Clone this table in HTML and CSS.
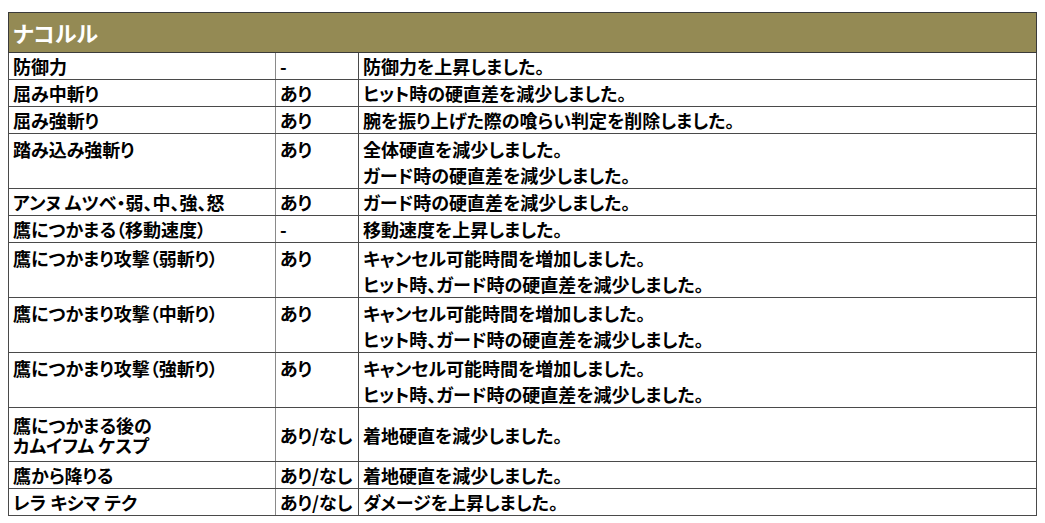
FILE: index.html
```html
<!DOCTYPE html>
<html lang="ja">
<head>
<meta charset="utf-8">
<title>ナコルル</title>
<link rel="stylesheet" href="styles.css">
</head>
<body>
<div class="sheet">
<table class="changes">
  <colgroup>
    <col class="c-move">
    <col class="c-flag">
    <col class="c-desc">
  </colgroup>
  <thead>
    <tr><th colspan="3" class="title">ナコルル</th></tr>
  </thead>
  <tbody>
    <tr><td>防御力</td><td>-</td><td>防御力を上昇しました。</td></tr>
    <tr><td>屈み中斬り</td><td>あり</td><td>ヒット時の硬直差を減少しました。</td></tr>
    <tr><td>屈み強斬り</td><td>あり</td><td>腕を振り上げた際の喰らい判定を削除しました。</td></tr>
    <tr class="multi"><td>踏み込み強斬り</td><td>あり</td><td>全体硬直を減少しました。<br>ガード時の硬直差を減少しました。</td></tr>
    <tr><td>アンヌ ムツベ・弱、中、強、怒</td><td>あり</td><td>ガード時の硬直差を減少しました。</td></tr>
    <tr><td>鷹につかまる（移動速度）</td><td>-</td><td>移動速度を上昇しました。</td></tr>
    <tr class="multi"><td>鷹につかまり攻撃（弱斬り）</td><td>あり</td><td>キャンセル可能時間を増加しました。<br>ヒット時、ガード時の硬直差を減少しました。</td></tr>
    <tr class="multi"><td>鷹につかまり攻撃（中斬り）</td><td>あり</td><td>キャンセル可能時間を増加しました。<br>ヒット時、ガード時の硬直差を減少しました。</td></tr>
    <tr class="multi"><td>鷹につかまり攻撃（強斬り）</td><td>あり</td><td>キャンセル可能時間を増加しました。<br>ヒット時、ガード時の硬直差を減少しました。</td></tr>
    <tr class="tall"><td><div class="tight">鷹につかまる後の<br>カムイフム ケスプ</div></td><td>あり/なし</td><td>着地硬直を減少しました。</td></tr>
    <tr><td>鷹から降りる</td><td>あり/なし</td><td>着地硬直を減少しました。</td></tr>
    <tr><td>レラ キシマ テク</td><td>あり/なし</td><td>ダメージを上昇しました。</td></tr>
  </tbody>
</table>
</div>
</body>
</html>
```

FILE: styles.css
```css
html, body {
  margin: 0;
  padding: 0;
  background: #ffffff;
}

.sheet {
  padding: 12px 0 0 8px;
}

.changes {
  border-collapse: collapse;
  table-layout: fixed;
  width: 1028px;
  font-family: "Noto Sans CJK JP", "Noto Sans", sans-serif;
  font-weight: 700;
  font-size: 18px;
  font-feature-settings: "palt";
  color: #000000;
  border: 1px solid #3a3a3a;
}

.c-move { width: 267px; }
.c-flag { width: 83px; }
.c-desc { width: 678px; }

.title {
  background: #948a54;
  color: #ffffff;
  font-size: 22px;
  font-weight: 700;
  text-align: left;
  height: 39px;
  padding: 0 0 0 4px;
  line-height: 39px;
  border: 1px solid #3a3a3a;
}

.changes td {
  border: 1px solid #4a4a4a;
  padding: 0 4px;
  height: 26px;
  line-height: 26px;
  vertical-align: top;
  white-space: nowrap;
  overflow: hidden;
}

.changes td:first-child {
  border-right-color: #8a8a8a;
}

.multi td {
  height: 54px;
  box-sizing: border-box;
  padding-top: 2px;
  line-height: 26px;
}

.tall td {
  height: 53px;
  vertical-align: middle;
}

.tight {
  line-height: 20px;
}
```
